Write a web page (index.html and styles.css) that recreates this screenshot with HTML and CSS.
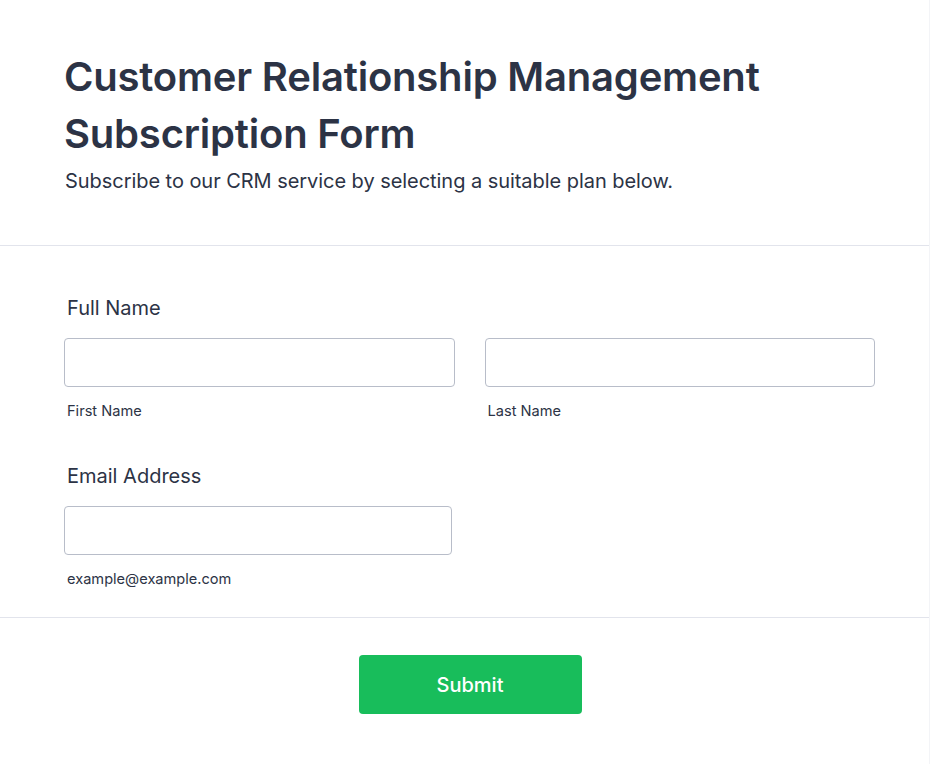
FILE: index.html
```html
<!DOCTYPE html>
<html lang="en">
<head>
<meta charset="utf-8">
<title>Customer Relationship Management Subscription Form</title>
<link rel="stylesheet" href="styles.css">
</head>
<body>
<div class="form-card">
  <header class="form-header">
    <h1 class="form-title">Customer Relationship Management Subscription Form</h1>
    <p class="form-subtitle">Subscribe to our CRM service by selecting a suitable plan below.</p>
  </header>
  <section class="form-body">
    <div class="field">
      <label class="field-label">Full Name</label>
      <div class="name-row">
        <div class="sub-field">
          <input class="text-input" type="text">
          <span class="sub-label">First Name</span>
        </div>
        <div class="sub-field">
          <input class="text-input" type="text">
          <span class="sub-label">Last Name</span>
        </div>
      </div>
    </div>
    <div class="field field-email">
      <label class="field-label">Email Address</label>
      <div class="sub-field email-field">
        <input class="text-input" type="email">
        <span class="sub-label">example@example.com</span>
      </div>
    </div>
  </section>
  <footer class="form-footer">
    <button class="submit-btn" type="button">Submit</button>
  </footer>
</div>
</body>
</html>
```
FILE: styles.css
```css
* { box-sizing: border-box; }
html, body {
  margin: 0;
  padding: 0;
  background: #ffffff;
}
body {
  font-family: Inter, "Noto Sans", "Liberation Sans", sans-serif;
  color: #2c3345;
}
.form-card {
  width: 930px;
  min-height: 764px;
  border-right: 1px solid #f3f4f7;
}
.form-header {
  padding: 48px 64px 0 64px;
  height: 246px;
  border-bottom: 1px solid #e2e4ec;
}
.form-title {
  margin: 0;
  font-size: 40px;
  line-height: 57px;
  font-weight: 600;
  letter-spacing: -0.2px;
  color: #2c3345;
}
.form-subtitle {
  margin: 5px 0 0 1px;
  font-size: 20px;
  line-height: 28px;
  font-weight: 400;
  letter-spacing: -0.05px;
  color: #2c3345;
}
.form-body {
  padding: 49px 54px 28px 64px;
  border-bottom: 1px solid #e2e4ec;
}
.field-label {
  display: block;
  margin-left: 3px;
  font-size: 20px;
  line-height: 26px;
  font-weight: 400;
  color: #2c3345;
}
.name-row {
  display: grid;
  grid-template-columns: 1fr 1fr;
  column-gap: 30px;
  margin-top: 17px;
}
.field-email {
  margin-top: 42px;
}
.email-field {
  width: 388px;
  margin-top: 17px;
}
.sub-field {
  display: flex;
  flex-direction: column;
}
.text-input {
  width: 100%;
  height: 49px;
  border: 1px solid #b8bdc9;
  border-radius: 4px;
  background: #fff;
  font: inherit;
  padding: 0 12px;
}
.sub-label {
  margin: 14px 0 0 3px;
  font-size: 14.6px;
  line-height: 20px;
  color: #2c3345;
}
.form-footer {
  display: flex;
  justify-content: center;
  padding-top: 37px;
}
.submit-btn {
  width: 223px;
  height: 59px;
  margin-left: 11px;
  border: none;
  border-radius: 4px;
  background: #18bd5b;
  color: #ffffff;
  font-family: inherit;
  font-size: 20px;
  font-weight: 500;
}
```
